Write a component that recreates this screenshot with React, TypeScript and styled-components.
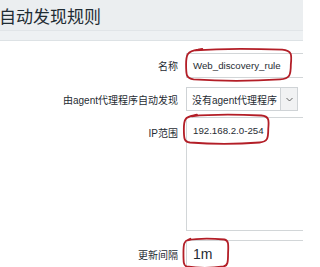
import React from "react";
import styled, { createGlobalStyle } from "styled-components";

const GlobalStyle = createGlobalStyle`
  html, body {
    margin: 0;
    padding: 0;
    background: #ffffff;
    overflow: hidden;
  }
  body {
    font-family: "Liberation Sans", "Noto Sans CJK SC", Arial, sans-serif;
    color: #1f2c33;
  }
`;

const Page = styled.div`
  width: 303px;
  height: 267px;
  overflow: hidden;
`;

const TitleBar = styled.div`
  height: 30px;
  background: #ebeef0;
  display: flex;
  align-items: center;
  border-bottom: 1px solid #e1e5e8;
`;

const Title = styled.h1`
  margin: 1px 0 0 -1px;
  font-family: "Noto Sans CJK SC", sans-serif;
  font-weight: 400;
  font-size: 17px;
  line-height: 1;
  color: #1f2c33;
  white-space: nowrap;
`;

const SubBar = styled.div`
  height: 9px;
  background: #eef1f3;
  border-bottom: 1px solid #dde2e5;
`;

const Form = styled.div`
  display: grid;
  grid-template-columns: 178px 1fr;
  column-gap: 8px;
  padding-top: 12px;
`;

const Label = styled.div<{ $top?: boolean; $mt?: number }>`
  display: flex;
  justify-content: flex-end;
  align-items: ${(p) => (p.$top ? "flex-start" : "center")};
  padding-top: ${(p) => (p.$top ? "8px" : "0")};
  margin-top: ${(p) => p.$mt ?? 0}px;
  font-size: 10px;
  color: #1f2c33;
  white-space: nowrap;
`;

const Field = styled.div<{ $mt?: number }>`
  position: relative;
  margin-top: ${(p) => p.$mt ?? 0}px;
  min-width: 0;
`;

const TextBox = styled.div<{ $h: number; $size?: number }>`
  box-sizing: border-box;
  height: ${(p) => p.$h}px;
  width: 140px;
  border: 1px solid #d2d6d8;
  border-right: none;
  display: flex;
  align-items: center;
  padding-left: 6px;
  font-size: ${(p) => p.$size ?? 9.7}px;
  color: #1f2c33;
  white-space: nowrap;
`;

const Select = styled.div`
  box-sizing: border-box;
  height: 24px;
  width: 112px;
  border: 1px solid #cfd3d6;
  display: flex;
  align-items: stretch;
`;

const SelectText = styled.div`
  flex: 1;
  display: flex;
  align-items: center;
  padding-left: 5px;
  font-size: 10px;
  white-space: nowrap;
  overflow: hidden;
`;

const SelectArrow = styled.div`
  width: 16px;
  background: #f1f2f3;
  border-left: 1px solid #cfd3d6;
  display: flex;
  align-items: center;
  justify-content: center;
`;

const TextArea = styled.div`
  box-sizing: border-box;
  height: 114px;
  width: 140px;
  border: 1px solid #d2d6d8;
  border-right: none;
  padding: 6px 0 0 6px;
  font-size: 9.7px;
  line-height: 13px;
  white-space: nowrap;
`;

const Scribble = styled.svg<{ $l: number; $t: number; $w: number; $h: number }>`
  position: absolute;
  left: ${(p) => p.$l}px;
  top: ${(p) => p.$t}px;
  width: ${(p) => p.$w}px;
  height: ${(p) => p.$h}px;
  overflow: visible;
  pointer-events: none;
`;

function Mark(props: { l: number; t: number; w: number; h: number }) {
  return (
    <Scribble $l={props.l} $t={props.t} $w={props.w} $h={props.h} viewBox="0 0 100 40" preserveAspectRatio="none">
      <path
        d="M10 3 C35 0 70 1 90 2 C99 3 99 8 98 20 C98 33 97 37 88 38 C65 40 30 40 8 38 C1 37 1 32 1 20 C1 8 2 4 12 2 L16 1"
        fill="none"
        stroke="#b31e27"
        strokeWidth={1.8}
        strokeLinecap="round"
        vectorEffect="non-scaling-stroke"
      />
    </Scribble>
  );
}

export default function App() {
  return (
    <Page>
      <GlobalStyle />
      <TitleBar>
        <Title>自动发现规则</Title>
      </TitleBar>
      <SubBar />
      <Form>
        <Label>名称</Label>
        <Field>
          <TextBox $h={25}>Web_discovery_rule</TextBox>
          <Mark l={-1} t={-5} w={108} h={33} />
        </Field>

        <Label $mt={9}>由agent代理程序自动发现</Label>
        <Field $mt={9}>
          <Select>
            <SelectText>没有agent代理程序</SelectText>
            <SelectArrow>
              <svg width="7" height="5" viewBox="0 0 7 5">
                <path d="M0.5 1 L3.5 4 L6.5 1" fill="none" stroke="#555" strokeWidth="0.9" />
              </svg>
            </SelectArrow>
          </Select>
        </Field>

        <Label $top $mt={6}>IP范围</Label>
        <Field $mt={6}>
          <TextArea>192.168.2.0-254</TextArea>
          <Mark l={-3} t={-3} w={87} h={30} />
        </Field>

        <Label $mt={9}>更新间隔</Label>
        <Field $mt={9}>
          <TextBox $h={28} $size={14}>1m</TextBox>
          <Mark l={-3} t={-2} w={46} h={30} />
        </Field>
      </Form>
    </Page>
  );
}
